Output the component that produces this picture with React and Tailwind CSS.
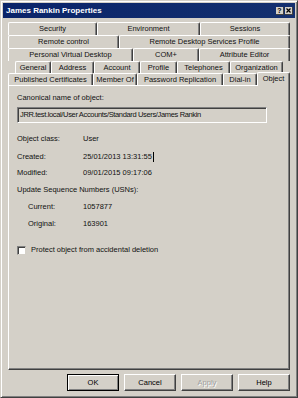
import React from "react";

const rows = [
  { offset: "ml-0", h: "h-[13px]", tabs: [["Security", "w-[89px]"], ["Environment", "w-[103px]"], ["Sessions", "w-[90px]"]] },
  { offset: "ml-0", h: "h-[13px]", tabs: [["Remote control", "w-[111px]"], ["Remote Desktop Services Profile", "w-[171px]"]] },
  { offset: "ml-0", h: "h-[13px]", tabs: [["Personal Virtual Desktop", "w-[125px]"], ["COM+", "w-[66px]"], ["Attribute Editor", "w-[91px]"]] },
  {
    offset: "ml-[7px]",
    h: "h-[12px]",
    tabs: [
      ["General", "w-[36px]"],
      ["Address", "w-[43px]"],
      ["Account", "w-[46px]"],
      ["Profile", "w-[37px]"],
      ["Telephones", "w-[53px]"],
      ["Organization", "w-[53px]"],
    ],
  },
];

const Tab = ({ label, width }) => (
  <div
    className={`${width} h-full flex items-center justify-center border-t border-l border-r border-t-white border-l-white border-r-[#404040] shadow-[inset_-1px_0_0_#808080] rounded-t-[2px] leading-none whitespace-nowrap`}
  >
    {label}
  </div>
);

const Btn = ({ children, primary, disabled }) => (
  <div
    className={`w-[52px] h-[17px] flex items-center justify-center ${
      primary
        ? "border border-black shadow-[inset_1px_1px_0_#fff,inset_-1px_-1px_0_#808080]"
        : "border border-t-white border-l-white border-r-[#404040] border-b-[#404040] shadow-[inset_-1px_-1px_0_#808080]"
    } ${disabled ? "text-[#a0a0a0] [text-shadow:1px_1px_0_#fff]" : "text-black"}`}
  >
    {children}
  </div>
);

const Field = ({ label, value, indent, className }) => (
  <div className={`flex leading-[10px] ${className}`}>
    <div className={indent ? "w-[55px] ml-[11px]" : "w-[66px]"}>{label}</div>
    <div>{value}</div>
  </div>
);

export default function App() {
  return (
    <div className="w-[298px] h-[398px] bg-[#d4d0c8] flex flex-col border border-t-[#d4d0c8] border-l-[#d4d0c8] border-r-[#404040] border-b-[#404040] shadow-[inset_1px_1px_0_#fff,inset_-1px_-1px_0_#808080] font-['Liberation_Sans',Arial,sans-serif] text-[7.5px] text-[#111] overflow-hidden">
      {/* Title bar */}
      <div className="mx-[2px] mt-[2px] h-[15px] bg-gradient-to-r from-[#0a246a] to-[#14306f] flex items-center justify-between pl-[3px] pr-[2px]">
        <span className="text-white font-bold text-[8px] leading-none">James Rankin Properties</span>
        <div className="flex gap-[1px]">
          <div className="w-[8px] h-[8px] bg-[#d4d0c8] border-r border-b border-[#404040] flex items-center justify-center text-[7px] font-bold leading-none text-black">
            ?
          </div>
          <div className="w-[8px] h-[8px] bg-[#d4d0c8] border-r border-b border-[#404040] flex items-center justify-center">
            <svg width="5" height="5" viewBox="0 0 5 5">
              <path d="M0.5 0.5L4.5 4.5M4.5 0.5L0.5 4.5" stroke="#000" strokeWidth="1.2" />
            </svg>
          </div>
        </div>
      </div>

      {/* Tabs */}
      <div className="px-[7px] pt-[4px]">
        {rows.map((row, i) => (
          <div key={i} className={`flex ${row.h} ${row.offset}`}>
            {row.tabs.map(([label, w]) => (
              <Tab key={label} label={label} width={w} />
            ))}
          </div>
        ))}
        <div className="flex h-[12px] items-end">
          <Tab label="Published Certificates" width="w-[85px]" />
          <Tab label="Member Of" width="w-[44px]" />
          <Tab label="Password Replication" width="w-[86px]" />
          <Tab label="Dial-in" width="w-[34px]" />
          <div className="w-[33px] h-[14px] -mb-[1px] relative z-10 bg-[#d4d0c8] flex items-start pt-[2px] justify-center border-t border-l border-r border-t-white border-l-white border-r-[#404040] shadow-[inset_-1px_0_0_#808080] rounded-t-[2px] leading-none">
            Object
          </div>
        </div>
      </div>

      {/* Panel */}
      <div className="mx-[7px] h-[285px] border border-t-white border-l-white border-r-[#404040] border-b-[#404040] shadow-[inset_-1px_-1px_0_#808080] pt-[7px] pl-[8px]">
        <div className="leading-[10px]">Canonical name of object:</div>
        <div className="mt-[4px] w-[250px] h-[16px] border border-t-[#808080] border-l-[#808080] border-r-white border-b-white shadow-[inset_1px_1px_0_#404040] flex items-center pl-[2px] whitespace-nowrap tracking-[-0.35px]">
          JRR.test.local/User Accounts/Standard Users/James Rankin
        </div>
        <Field className="mt-[11px]" label="Object class:" value="User" />
        <Field
          className="mt-[8px]"
          label="Created:"
          value={
            <span className="flex items-center">
              25/01/2013 13:31:55<span className="inline-block w-[1px] h-[10px] bg-black ml-[1px]" />
            </span>
          }
        />
        <Field className="mt-[6px]" label="Modified:" value="09/01/2015 09:17:06" />
        <div className="mt-[7px] leading-[10px]">Update Sequence Numbers (USNs):</div>
        <Field className="mt-[7px]" indent label="Current:" value="1057877" />
        <Field className="mt-[7px]" indent label="Original:" value="163901" />
        <div className="mt-[16px] flex items-center leading-[10px]">
          <div className="w-[9px] h-[9px] bg-white border border-t-[#808080] border-l-[#808080] border-r-[#d4d0c8] border-b-[#d4d0c8] shadow-[inset_1px_1px_0_#404040]" />
          <span className="ml-[5px]">Protect object from accidental deletion</span>
        </div>
      </div>

      {/* Buttons */}
      <div className="flex justify-end gap-[5px] pr-[7px] mt-[4px]">
        <Btn primary>OK</Btn>
        <Btn>Cancel</Btn>
        <Btn disabled>Apply</Btn>
        <Btn>Help</Btn>
      </div>
    </div>
  );
}
